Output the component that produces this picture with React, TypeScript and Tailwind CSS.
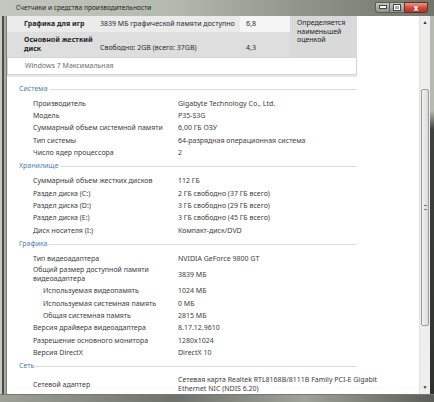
type Row = { label: string; value: string; sub?: boolean; tall?: boolean }

const sections: { title: string; rows: Row[] }[] = [
  {
    title: 'Система',
    rows: [
      { label: 'Производитель', value: 'Gigabyte Technology Co., Ltd.' },
      { label: 'Модель', value: 'P35-S3G' },
      { label: 'Суммарный объем системной памяти', value: '6,00 ГБ ОЗУ' },
      { label: 'Тип системы', value: '64-разрядная операционная система' },
      { label: 'Число ядер процессора', value: '2' },
    ],
  },
  {
    title: 'Хранилище',
    rows: [
      { label: 'Суммарный объем жестких дисков', value: '112 ГБ' },
      { label: 'Раздел диска (C:)', value: '2 ГБ свободно (37 ГБ всего)' },
      { label: 'Раздел диска (D:)', value: '3 ГБ свободно (29 ГБ всего)' },
      { label: 'Раздел диска (E:)', value: '3 ГБ свободно (45 ГБ всего)' },
      { label: 'Диск носителя (I:)', value: 'Компакт-диск/DVD' },
    ],
  },
  {
    title: 'Графика',
    rows: [
      { label: 'Тип видеоадаптера', value: 'NVIDIA GeForce 9800 GT' },
      { label: 'Общий размер доступной памяти\nвидеоадаптера', value: '3839 МБ', tall: true },
      { label: 'Используемая видеопамять', value: '1024 МБ', sub: true },
      { label: 'Используемая системная память', value: '0 МБ', sub: true },
      { label: 'Общая системная память', value: '2815 МБ', sub: true },
      { label: 'Версия драйвера видеоадаптера', value: '8.17.12.9610' },
      { label: 'Разрешение основного монитора', value: '1280x1024' },
      { label: 'Версия DirectX', value: 'DirectX 10' },
    ],
  },
  {
    title: 'Сеть',
    rows: [
      {
        label: 'Сетевой адаптер',
        value: 'Сетевая карта Realtek RTL8168B/8111B Family PCI-E Gigabit\nEthernet NIC (NDIS 6.20)',
        tall: true,
      },
    ],
  },
]

function Section({ title, rows }: { title: string; rows: Row[] }) {
  return (
    <div className="flex flex-col">
      {/* heading with rule */}
      <div className="flex items-center h-[14px] w-[350px] pl-[12px]">
        <span className="text-[#4a80bb] pr-[2px]">{title}</span>
        <div className="flex-1 h-px bg-[#d9dcdf]" />
      </div>
      <div className="flex flex-col mt-[1px]">
        {rows.map((r) => (
          <div
            key={r.label}
            className={`flex items-center text-[#3c3c3c] ${r.tall ? 'h-[20px]' : 'h-[12.4px]'}`}
          >
            <div
              className={`w-[171px] shrink-0 whitespace-pre-line leading-[9px] ${r.sub ? 'pl-[36px]' : 'pl-[26px]'}`}
            >
              {r.label}
            </div>
            <div className="whitespace-pre-line leading-[9px]">{r.value}</div>
          </div>
        ))}
      </div>
    </div>
  )
}

export default function App() {
  return (
    <div className="w-[434px] h-[402px] flex flex-col overflow-hidden bg-[#a9aea5] text-[7px] font-['Noto_Sans',sans-serif]">
      {/* Title bar */}
      <div className="h-[17px] flex items-center bg-[linear-gradient(to_right,#c4c7bf,#b4b9ae_40%,#8e9487_70%,#6f756a)]">
        <span className="pl-[16px] text-[6.6px] text-[#1e1e1e]">Счетчики и средства производительности</span>
        <div className="ml-auto flex items-start self-start mt-[2px] mr-[6px]">
          <div className="w-[15px] h-[11px] flex items-end justify-center pb-[3px] rounded-bl-[3px] border border-[#5a5f57] bg-[linear-gradient(#c2c6bd,#8f948a)]">
            <div className="w-[6px] h-[2px] bg-white border border-[#444] box-content" />
          </div>
          <div className="w-[14px] h-[11px] flex items-center justify-center border-y border-[#5a5f57] bg-[linear-gradient(#c2c6bd,#8f948a)]">
            <div className="w-[6px] h-[5px] border-[1.5px] border-white outline outline-[#444]" />
          </div>
          <div className="w-[24px] h-[11px] flex items-center justify-center rounded-br-[3px] border border-[#6a2a22] bg-[linear-gradient(#e89a8a,#c84a3a_55%,#b8372a)] text-white text-[8px] font-bold leading-none">
            x
          </div>
        </div>
      </div>

      <div className="flex flex-1">
        {/* left frame */}
        <div className="w-[7px] bg-[linear-gradient(to_right,#c7c9c2_0,#c7c9c2_2px,#4a4d48_2px,#4a4d48_4px,#a6aaa2_4px,#a6aaa2_6px,#7d817a_6px)]" />

        {/* content */}
        <div className="w-[412px] bg-white flex flex-col">
          {/* rating table */}
          <div className="flex w-[350px]">
            <div className="flex flex-col w-[283px]">
              <div className="flex h-[16px] items-center bg-[#ebebeb]">
                <div className="w-[88px] pl-[17px] font-bold text-[#1e1e1e]">Графика для игр</div>
                <div className="w-[145px] pl-[5px] text-[#2a2a2a]">3839 МБ графической памяти доступно</div>
                <div className="w-[50px] h-full flex items-center pl-[6px] bg-[#f5f5f5] text-[#2a2a2a]">6,8</div>
              </div>
              <div className="flex h-[25px] items-end pb-[4px] bg-[#dedede]">
                <div className="w-[88px] pl-[17px] font-bold text-[#1e1e1e] leading-[9px]">
                  Основной жесткий
                  <br />
                  диск
                </div>
                <div className="w-[145px] pl-[5px] text-[#2a2a2a]">Свободно: 2GB (всего: 37GB)</div>
                <div className="w-[50px] pl-[6px] text-[#2a2a2a]">4,3</div>
              </div>
            </div>
            <div className="w-[67px] bg-[#d9d9d9] pl-[7px] pt-[3px] leading-[8.5px] text-[#1e1e1e]">
              Определяется
              <br />
              наименьшей
              <br />
              оценкой
            </div>
          </div>
          <div className="w-[350px] h-[18px] flex items-center pl-[17px] border border-[#d4d4d4] text-[#6e6e6e]">
            Windows 7 Максимальная
          </div>
          <div className="w-[350px] h-[2px] bg-[#e8e8e8]" />

          <div className="flex flex-col mt-[5px] gap-[0.6px]">
            {sections.map((s) => (
              <Section key={s.title} title={s.title} rows={s.rows} />
            ))}
          </div>
        </div>

        {/* scrollbar */}
        <div className="w-[11px] flex flex-col bg-[#eeeeee] border-l border-[#e2e2e2]">
          <div className="h-[13px] flex items-center justify-center text-[5px] text-[#333]">▲</div>
          <div className="h-[60px]" />
          <div className="h-[237px] mx-[1px] flex items-center justify-center rounded-[2px] border border-[#9c9c9c] bg-[linear-gradient(to_right,#f2f2f2,#dadada)]">
            <div className="w-[3px] h-[5px] border-y border-[#777]" />
          </div>
          <div className="flex-1" />
          <div className="h-[13px] flex items-center justify-center text-[5px] text-[#333]">▼</div>
        </div>

        {/* right frame */}
        <div className="w-[4px] bg-[linear-gradient(#b6bab1_0,#b6bab1_25%,#3e413c_30%,#2e302c)]" />
      </div>

      {/* bottom frame */}
      <div className="h-[8px] bg-[linear-gradient(to_right,#9da198,#6e726b_40%,#9ea297_70%,#5a5e57)] border-t border-[#777]" />
    </div>
  )
}
